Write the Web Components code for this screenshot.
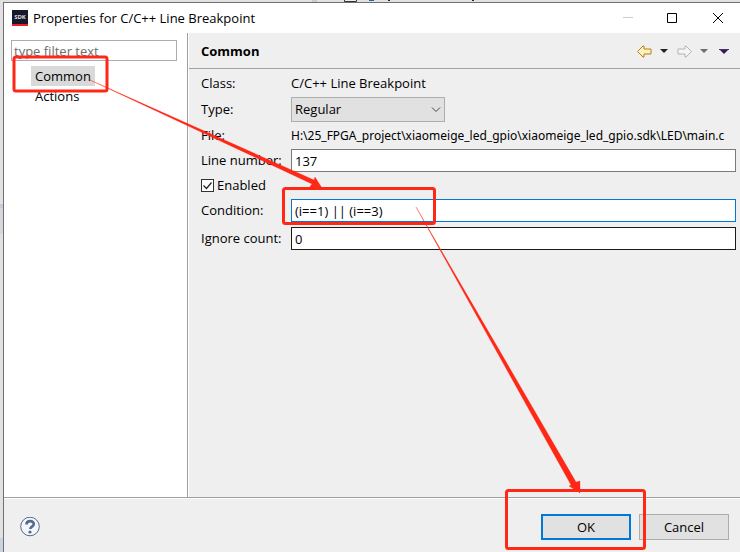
<!DOCTYPE html>
<html lang="en">
<head>
<meta charset="utf-8">
<title>Properties for C/C++ Line Breakpoint</title>
<style>
  body {
    margin: 0;
    font: 13px/17px "Open Sans", "Noto Sans", sans-serif;
    color: #000;
  }
</style>
</head>
<body>
<properties-dialog>
  <title-bar slot="title">Properties for C/C++ Line Breakpoint</title-bar>
  <page-tree slot="tree">
    <tree-item selected>Common</tree-item>
    <tree-item>Actions</tree-item>
  </page-tree>
  <page-header slot="page">Common</page-header>
  <field-list slot="page">
    <text-row label="Class:">C/C++ Line Breakpoint</text-row>
    <select-row label="Type:" value="Regular"></select-row>
    <text-row label="File:" path>H:\25_FPGA_project\xiaomeige_led_gpio\xiaomeige_led_gpio.sdk\LED\main.c</text-row>
    <input-row label="Line number:" value="137"></input-row>
    <check-row>Enabled</check-row>
    <input-row label="Condition:" value="(i==1) || (i==3)" style="--edge: #0078d7"></input-row>
    <input-row label="Ignore count:" value="0" style="--edge: #1a1a1a"></input-row>
  </field-list>
  <button-bar slot="footer"></button-bar>
</properties-dialog>
<mark-layer></mark-layer>

<script>
(function() {
    function define(name, html, setup) {
        let template = document.createElement("template");
        template.innerHTML = html;

        customElements.define(name, class extends HTMLElement {
            constructor() {
                super();
                this._shadowRoot = this.attachShadow({mode: "open"});
                this._shadowRoot.appendChild(template.content.cloneNode(true));
                if (setup) {
                    setup(this, this._shadowRoot);
                }
            }
        });
    }

    define("properties-dialog", `
    <style>
      :host {
        display: flex;
        flex-direction: column;
        box-sizing: border-box;
        min-height: 100vh;
        padding: 2px 0 0 3px;
        position: relative;
        background: #e1e1e1;
      }
      .behind { position: absolute; top: 0; left: 0; }
      .window {
        flex: 1;
        display: flex;
        flex-direction: column;
        position: relative;
        border-top: 1px solid #707070;
        border-left: 1px solid #707070;
        background: #efefef;
      }
      .body { flex: 1; display: flex; }
      .tree {
        width: 183px;
        background: #fff;
        border-right: 1px solid #a0a0a0;
      }
      .page { flex: 1; min-width: 0; border-left: 1px solid #fff; }
      footer { border-top: 1px solid #a0a0a0; box-shadow: inset 0 1px #fff; }
    </style>
    <svg class="behind" width="740" height="552" aria-hidden="true">
      <path d="M0 204h3v4H0zM312 0h5v2h-5z" fill="#c5cbd9"/>
      <path d="M0 208h3v26H0z" fill="#d5d7dc"/>
      <path d="M0 538h3v14H0z" fill="#c8d3df"/>
      <path d="M344.500 0v1.500h12V0" fill="#eee" stroke="#333"/>
      <path d="M369 0h5v1h-5z" fill="#315f8d"/>
      <path d="M388 0h2v1h-2zM472 0h2v1h-2z" fill="#222"/>
    </svg>
    <div class="window">
      <slot name="title"></slot>
      <div class="body">
        <div class="tree"><slot name="tree"></slot></div>
        <div class="page"><slot name="page"></slot></div>
      </div>
      <footer><slot name="footer"></slot></footer>
    </div>
    `);

    define("title-bar", `
    <style>
      :host {
        display: flex;
        align-items: center;
        height: 30px;
        padding-left: 8px;
        background: #fff;
      }
      .title { flex: 1; padding-left: 5px; white-space: nowrap; }
      .logo { flex: none; background: #16192d; }
      button {
        width: 45px;
        height: 30px;
        padding: 0;
        border: 0;
        background: none;
      }
      svg { display: block; margin: auto; }
    </style>
    <svg class="logo" width="16" height="16" viewBox="0 0 16 16">
      <path d="M0 14h16v2H0z" fill="#ed1c2a"/>
      <text x="8" y="9" font-size="6" font-weight="700" fill="#ddd" text-anchor="middle">SDK</text>
    </svg>
    <span class="title"><slot></slot></span>
    <button aria-label="Minimize" disabled>
      <svg width="12" height="12"><path d="M1 5.500h10" stroke="#ccc"/></svg>
    </button>
    <button aria-label="Maximize">
      <svg width="12" height="12"><path d="M.5 1.500h9v9h-9z" fill="none" stroke="#000"/></svg>
    </button>
    <button aria-label="Close">
      <svg width="12" height="12"><path d="M1 1l10 10M11 1L1 11" stroke="#000"/></svg>
    </button>
    `);

    define("page-tree", `
    <style>
      :host { display: block; padding: 7px 10px 0 7px; }
      input {
        display: block;
        box-sizing: border-box;
        width: 100%;
        height: 21px;
        margin-bottom: 5px;
        padding: 0 2px;
        border: 1px solid #abadb3;
        font: inherit;
        outline: none;
      }
      input::placeholder { color: #6d6d6d; opacity: 1; }
      nav { padding-left: 20px; }
    </style>
    <input type="text" placeholder="type filter text" aria-label="Filter">
    <nav><slot></slot></nav>
    `);

    define("tree-item", `
    <style>
      :host { display: block; }
      a {
        display: inline-block;
        padding: 0 4px;
        line-height: 20px;
        color: inherit;
        text-decoration: none;
        vertical-align: top;
      }
      :host([selected]) a { background: #d9d9d9; }
    </style>
    <a href="#"><slot></slot></a>
    `);

    define("page-header", `
    <style>
      :host {
        display: flex;
        align-items: center;
        height: 35px;
        padding: 0 8px 0 12px;
        border-bottom: 1px solid #a0a0a0;
      }
      h1 { flex: 1; margin: 0; padding-top: 2px; font: inherit; font-weight: 700; }
      .tools { display: flex; gap: 4px; }
      button { padding: 0; border: 0; background: none; }
      svg { display: block; }
    </style>
    <h1><slot></slot></h1>
    <div class="tools">
      <button aria-label="Back">
        <svg width="16" height="16"><path d="M1.500 8.500L7 3h1v3h7v5H8v3H7z" fill="#fff3bd" stroke="#bb7b14"/></svg>
      </button>
      <button aria-label="Back history">
        <svg width="16" height="16"><path d="M4 6h8l-4 4z" fill="#222"/></svg>
      </button>
      <button aria-label="Forward" disabled>
        <svg width="16" height="16"><path d="M15.500 8.500L10 3H9v3H2v5h7v3h1z" fill="#f5f5f5" stroke="#b3b3b3"/></svg>
      </button>
      <button aria-label="Forward history" disabled>
        <svg width="16" height="16"><path d="M4 6h8l-4 4z" fill="#6d6d6d"/></svg>
      </button>
      <button aria-label="Menu">
        <svg width="16" height="16"><path d="M3 6h10l-5 5z" fill="#302044"/><path d="M3 6.500h10" stroke="#4f2a80"/></svg>
      </button>
    </div>
    `);

    define("field-list", `
    <style>
      :host {
        display: flex;
        flex-direction: column;
        gap: 5px;
        padding: 6px 4px 6px 12px;
      }
    </style>
    <slot></slot>
    `);

    const rowStyle = `
      :host {
        display: grid;
        grid-template-columns: 90px minmax(0, 1fr);
        align-items: center;
        white-space: nowrap;
      }
    `;

    function setLabel(host, root) {
        root.querySelector(".label").textContent = host.getAttribute("label");
    }

    define("text-row", `
    <style>
      ${rowStyle}
      :host([path]) .value { font-family: "Noto Sans", sans-serif; font-size: 12px; }
    </style>
    <span class="label"></span>
    <span class="value"><slot></slot></span>
    `, setLabel);

    define("select-row", `
    <style>
      ${rowStyle}
      .box { position: relative; width: 154px; }
      select {
        display: block;
        appearance: none;
        box-sizing: border-box;
        width: 100%;
        height: 25px;
        padding: 0 20px 0 3px;
        border: 1px solid #adadad;
        border-radius: 0;
        background: #e1e1e1;
        color: inherit;
        font: inherit;
      }
      svg { position: absolute; right: 4px; top: 9px; pointer-events: none; }
    </style>
    <label class="label" for="field"></label>
    <div class="box">
      <select id="field"><option></option></select>
      <svg width="10" height="8"><path d="M1 1.500l4 4 4-4" fill="none" stroke="#444"/></svg>
    </div>
    `, function(host, root) {
        setLabel(host, root);
        root.querySelector("option").textContent = host.getAttribute("value");
    });

    define("input-row", `
    <style>
      ${rowStyle}
      input {
        box-sizing: border-box;
        width: 100%;
        height: 23px;
        padding: 0 3px;
        border: 1px solid var(--edge, #7a7a7a);
        background: #fff;
        color: inherit;
        font: inherit;
        outline: none;
      }
    </style>
    <label class="label" for="field"></label>
    <input id="field" type="text">
    `, function(host, root) {
        setLabel(host, root);
        root.getElementById("field").value = host.getAttribute("value");
    });

    define("check-row", `
    <style>
      :host { display: flex; align-items: center; }
      label { display: flex; align-items: center; gap: 3px; }
      input {
        appearance: none;
        box-sizing: border-box;
        width: 13px;
        height: 13px;
        margin: 0;
        border: 1px solid #333;
        background: #fff;
      }
      input:checked {
        background: #fff url('data:image/svg+xml,<svg xmlns="http://www.w3.org/2000/svg" width="11" height="11"><path d="M1.500 5.500l3 3 5-6" fill="none" stroke="%23222" stroke-width="1.200"/></svg>') center no-repeat;
      }
    </style>
    <label><input type="checkbox" checked><slot></slot></label>
    `);

    define("button-bar", `
    <style>
      :host {
        display: flex;
        align-items: center;
        gap: 8px;
        padding: 16px 11px 12px 16px;
      }
      .help {
        margin-right: auto;
        padding: 0;
        border: 0;
        background: none;
      }
      .help svg { display: block; }
      .push {
        width: 90px;
        height: 26px;
        padding: 0;
        border: 1px solid #adadad;
        background: #e1e1e1;
        color: inherit;
        font: inherit;
      }
      .default { border: 2px solid #0078d7; }
    </style>
    <button class="help" aria-label="Help">
      <svg width="20" height="20">
        <circle cx="10" cy="9.500" r="9.300" fill="#f4f6fa" stroke="#526a91"/>
        <path d="M6.500 7.500c0-4.500 7.300-4.300 7.300-.5 0 2.600-3.500 2.700-3.500 5" fill="none" stroke="#526a91" stroke-width="2.600"/>
        <circle cx="10" cy="15" r="1.600" fill="#526a91"/>
      </svg>
    </button>
    <button class="push default">OK</button>
    <button class="push">Cancel</button>
    `);

    // red boxes and arrows drawn over the dialog
    define("mark-layer", `
    <style>
      :host { position: absolute; top: 0; left: 0; pointer-events: none; }
      svg { display: block; }
    </style>
    <svg width="740" height="552" aria-hidden="true">
      <g fill="none" stroke="#ff2716" stroke-width="3">
        <rect x="14" y="57" width="93" height="34" rx="2"/>
        <rect x="283.500" y="188.500" width="151" height="35" rx="2"/>
        <rect x="506.500" y="490.500" width="138" height="58" rx="2"/>
      </g>
      <g fill="#ff2716" stroke="#ff2716" stroke-width=".3">
        <path d="M90 80L314 180l1-3 7 11h-13l3-4z"/>
        <path d="M416 207L576 482l4-1v12l-11-7 2-1z"/>
      </g>
    </svg>
    `);
})();
</script>
</body>
</html>
